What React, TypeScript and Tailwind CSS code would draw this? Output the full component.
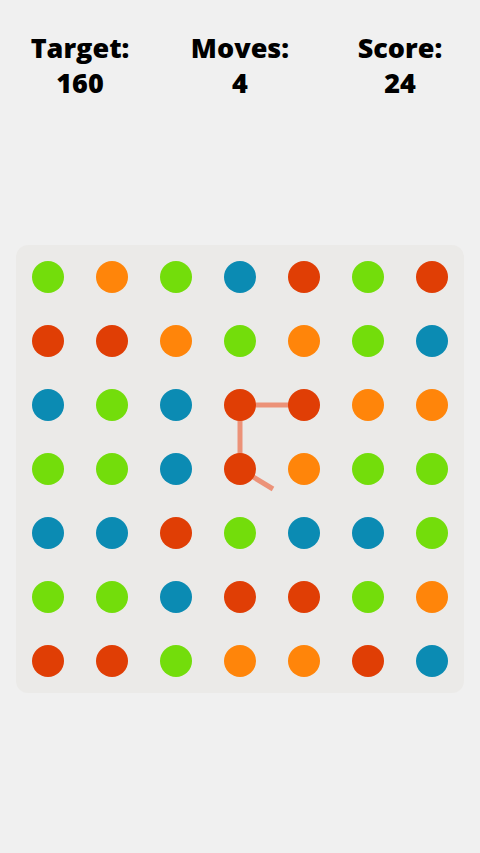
const C: Record<string, string> = {
  G: "bg-[#73dd0b]",
  O: "bg-[#ff850a]",
  R: "bg-[#e03e05]",
  B: "bg-[#0b8bb3]",
};

const board = [
  "GOGBRGR",
  "RROGOGB",
  "BGBRROO",
  "GGBROGG",
  "BBRGBBG",
  "GGBRRGO",
  "RRGOORB",
];

const stats = [
  { label: "Target:", value: "160" },
  { label: "Moves:", value: "4" },
  { label: "Score:", value: "24" },
];

export default function App() {
  return (
    <div className="min-h-[853px] w-[480px] bg-[#f0f0f0] font-['Open_Sans',sans-serif] text-black">
      <div className="grid grid-cols-3 pt-[30px]">
        {stats.map((s) => (
          <div key={s.label} className="flex flex-col items-center text-[27px] font-extrabold leading-[35px]">
            <span>{s.label}</span>
            <span>{s.value}</span>
          </div>
        ))}
      </div>

      <div className="relative mx-4 mt-[145px] w-[448px] rounded-xl bg-[#ebeae8]">
        <svg className="absolute inset-0" width="448" height="448" viewBox="0 0 448 448">
          <g stroke="#ec9278" strokeWidth="5" fill="none">
            <line x1="224" y1="160" x2="288" y2="160" />
            <line x1="224" y1="160" x2="224" y2="224" />
            <line x1="224" y1="224" x2="257" y2="244" />
          </g>
        </svg>
        <div className="relative grid grid-cols-7">
          {board.map((row, r) =>
            row.split("").map((c, i) => (
              <div key={`${r}-${i}`} className="flex h-16 w-16 items-center justify-center">
                <div className={`h-8 w-8 rounded-full ${C[c]}`} />
              </div>
            ))
          )}
        </div>
      </div>
    </div>
  );
}
